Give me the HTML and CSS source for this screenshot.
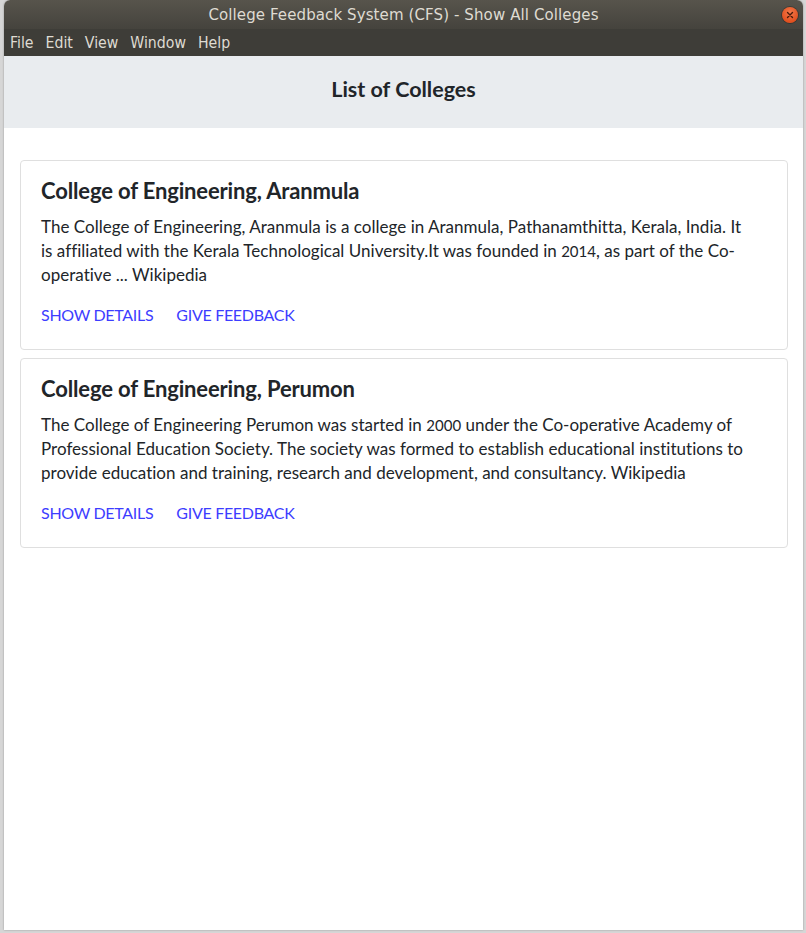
FILE: index.html
```html
<!DOCTYPE html>
<html lang="en">
<head>
<meta charset="utf-8">
<title>College Feedback System (CFS) - Show All Colleges</title>
<link rel="stylesheet" href="styles.css">
</head>
<body>
<div class="desktop">
  <div class="window">
    <div class="titlebar">
      <span class="title">College Feedback System (CFS) - Show All Colleges</span>
      <span class="close"><svg width="10" height="10" viewBox="0 0 10 10"><path d="M2.5 2.5 L7.5 7.5 M7.5 2.5 L2.5 7.5" stroke="#4a1a0a" stroke-width="1.4" stroke-linecap="round"/></svg></span>
    </div>
    <div class="menubar">
      <span>File</span><span>Edit</span><span>View</span><span>Window</span><span>Help</span>
    </div>
    <div class="content">
      <header class="page-header">List of Colleges</header>
      <main class="list">
        <section class="card">
          <h2 class="card-title">College of Engineering, Aranmula</h2>
          <p class="card-text">The College of Engineering, Aranmula is a college in Aranmula, Pathanamthitta, Kerala, India. It<br>is affiliated with the Kerala Technological University.It was founded in <span class="num">2014</span>, as part of the Co-operative ... Wikipedia</p>
          <div class="actions"><a class="btn">Show Details</a><a class="btn">Give Feedback</a></div>
        </section>
        <section class="card">
          <h2 class="card-title">College of Engineering, Perumon</h2>
          <p class="card-text">The College of Engineering Perumon was started in <span class="num">2000</span> under the Co-operative Academy of Professional Education Society. The society was formed to establish educational institutions to provide education and training, research and development, and consultancy. Wikipedia</p>
          <div class="actions"><a class="btn">Show Details</a><a class="btn">Give Feedback</a></div>
        </section>
      </main>
    </div>
  </div>
</div>
</body>
</html>
```

FILE: styles.css
```css
html, body {
  margin: 0;
  padding: 0;
}
body {
  background: #d6d6d6;
  width: 806px;
  height: 933px;
  overflow: hidden;
}
.desktop {
  padding: 0 3px 3px 4px;
  height: 933px;
  box-sizing: border-box;
}
.window {
  width: 799px;
  height: 930px;
  background: #ffffff;
  border-radius: 6px 6px 0 0;
  overflow: hidden;
  display: flex;
  flex-direction: column;
  box-shadow: 0 0 2px rgba(0,0,0,0.35);
}
.titlebar {
  height: 29px;
  background: linear-gradient(#57544c, #45433d);
  display: flex;
  align-items: center;
  justify-content: center;
  position: relative;
  font-family: "DejaVu Sans Condensed", "DejaVu Sans", sans-serif;
  font-size: 16.7px;
  color: #dfdbd2;
}
.title {
  padding-bottom: 1px;
  letter-spacing: 0.1px;
}
.close {
  position: absolute;
  right: 5px;
  top: 7px;
  width: 16px;
  height: 16px;
  border-radius: 50%;
  background: radial-gradient(circle at 50% 35%, #f37a4c, #e2501f 70%);
  display: flex;
  align-items: center;
  justify-content: center;
  box-shadow: 0 0 0 1px rgba(0,0,0,0.25);
}
.menubar {
  height: 27px;
  background: #3e3d38;
  display: flex;
  align-items: center;
  gap: 12px;
  padding-left: 6px;
  font-family: "DejaVu Sans Condensed", "DejaVu Sans", sans-serif;
  font-size: 15.7px;
  color: #dfdbd2;
}
.content {
  flex: 1;
  font-family: Lato, "Noto Sans", sans-serif;
  color: #212529;
}
.page-header {
  height: 72px;
  background: #e9ecef;
  display: flex;
  align-items: center;
  justify-content: center;
  font-size: 21.5px;
  font-weight: 700;
  padding-bottom: 6px;
  box-sizing: border-box;
}
.list {
  padding: 32px 15px 0 16px;
  display: flex;
  flex-direction: column;
  gap: 8px;
}
.card {
  border: 1px solid #dfdfdf;
  border-radius: 4px;
  padding: 17px 20px 18px 20px;
  height: 190px;
  box-sizing: border-box;
}
.card-title {
  margin: 0 0 11px;
  font-size: 22px;
  font-weight: 700;
  line-height: 26px;
  letter-spacing: -0.15px;
}
.card-text {
  margin: 0;
  font-size: 17px;
  line-height: 24px;
  letter-spacing: 0.02px;
}
.num {
  font-size: 15px;
}
.actions {
  margin-top: 16px;
  display: flex;
  gap: 23px;
}
.btn {
  font-size: 16px;
  line-height: 24px;
  text-transform: uppercase;
  color: #3d3dff;
  letter-spacing: -0.3px;
}
```
